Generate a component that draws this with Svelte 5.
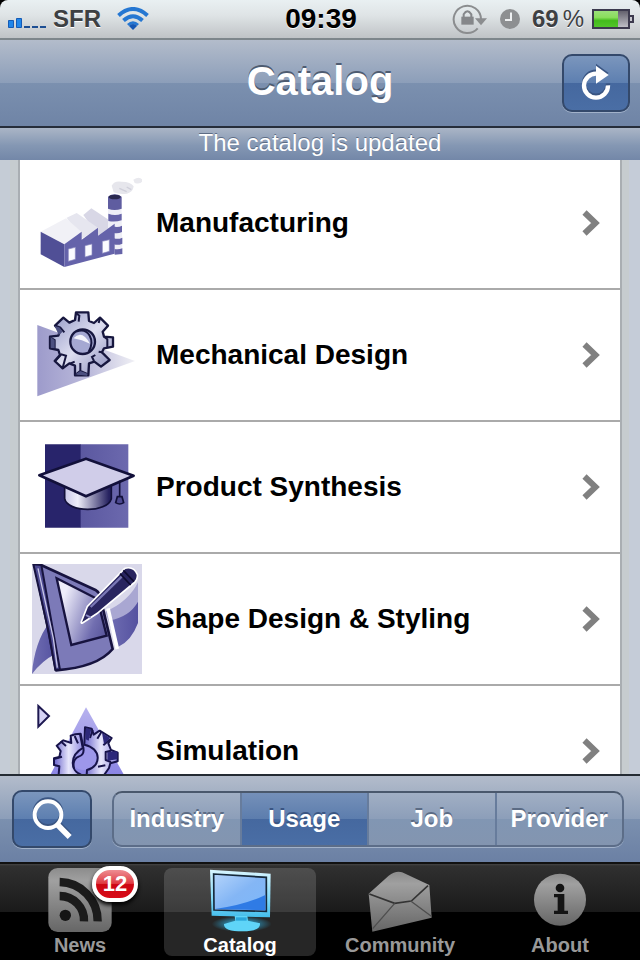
<script>
  let segment = $state('Usage');
  let tab = $state('Catalog');
  const segments = ['Industry', 'Usage', 'Job', 'Provider'];
</script>

{#snippet factory()}
  <svg class="art" viewBox="36 9 330 330" aria-hidden="true">
    <path d="M275 62q8-16 30-12q28 0 36 14q-2 18-20 22q-20 4-40-4z" fill="#e6e6ec" />
    <path d="M340 44q20-12 28 2q-4 14-24 8z" fill="#e9e9ee" />
    <path d="M298 70l22 10M320 66l14 8" stroke="#cfcfda" stroke-width="4" />
    <path d="M190 150l24-20 70 46-50 36z" fill="#d8d7e6" />
    <path d="M264 98h40l3 170-43-6z" fill="#efeff7" />
    <path d="M264 95q20-14 41 0v36q-22 8-41 0z" fill="#5f5da0" />
    <ellipse cx="284" cy="96" rx="18" ry="7" fill="#29284f" />
    <path d="M265 146q20 8 40 0v20q-20 6-40 2zM278 184q16 5 28-2v19q-14 6-27 2zM282 220q12 4 25-2v18q-14 6-25 2zM284 252q12 2 23-2v17l-23 2z" fill="#6663a8" />
    <path d="M140 158l30-14 66 46-52 32z" fill="#e6e6ef" />
    <path d="M62 200l76-40 46 40-50 38z" fill="#f1f1f6" />
    <path d="M62 200l71 38v68l-71-38z" fill="#504f96" />
    <path d="M133 238l52-38v24l49-36v24l50-36v90l-151 40z" fill="#6563aa" />
    <path d="M145 252l21-5v36l-21 6zM195 242l21-5v33l-21 6zM247 229l21-5v35l-21 6z" fill="#fbfbff" stroke="#8a88c0" stroke-width="2" />
  </svg>
{/snippet}

{#snippet gear()}
  <svg class="art" viewBox="36 15 330 330" aria-hidden="true">
    <defs>
      <linearGradient id="tri" x1="0" x2="1"><stop offset="0" stop-color="#9d9bcb" /><stop offset=".55" stop-color="#bdbcdc" /><stop offset="1" stop-color="#f0f0f5" /></linearGradient>
      <linearGradient id="steel" x1="0" y1="0" x2="1" y2="1"><stop offset="0" stop-color="#8f94c4" /><stop offset=".5" stop-color="#dddef0" /><stop offset="1" stop-color="#8487b8" /></linearGradient>
    </defs>
    <path d="M52 90L345 198 52 304z" fill="url(#tri)" />
    <path d="M168 52h37l2 26 15 6 18-16 24 24-16 18 4 15 27 2v28l-27 5-6 12 23 23-26 20-20-15-16 5-2 36h-40v-29l-17-7-20 15-24-22 16-18-5-15-25-5v-35l25-3 5-14-15-16 25-24 18 15 17-8z" fill="url(#steel)" stroke="#17173f" stroke-width="7" stroke-linejoin="round" />
    <path d="M168 54l10 8-2 18M107 92l14 6 12 14M90 127l14 8v26M106 198l18-20 14 4-10 36M165 240l16-12 24 10M181 228v-24M150 206l14-6M222 198l-6-12 10-6M246 172l-10-2M252 125l10 8v24M240 70l-4 14" fill="none" stroke="#17173f" stroke-width="6" />
    <path d="M104 93l14 4 10 13-12 10zM92 126l12 10v24l-12-2zM166 238l15-10 22 8-2 6z" fill="#4c5080" />
    <circle cx="188" cy="140" r="37" fill="#a5a8d2" stroke="#17173f" stroke-width="7" />
    <path d="M160 130q26-28 50 16q-24-12-50-16z" fill="#f4f4fb" />
    <path d="M168 110c38-16 58 26 38 60" fill="none" stroke="#17173f" stroke-width="6" />
  </svg>
{/snippet}

{#snippet mortarboard()}
  <svg class="art" viewBox="36 6 330 330" aria-hidden="true">
    <defs>
      <linearGradient id="cap" x1="0" x2="1"><stop offset="0" stop-color="#c9c7e8" /><stop offset=".28" stop-color="#eeeefa" /><stop offset=".95" stop-color="#25215f" /></linearGradient>
      <linearGradient id="wall" x1="0" x2="1"><stop offset="0" stop-color="#5b58a0" /><stop offset="1" stop-color="#6c69ae" /></linearGradient>
    </defs>
    <path d="M75 43h108v250H75z" fill="#28246b" />
    <path d="M182 43h143v250H182z" fill="url(#wall)" />
    <path d="M134 160v46c8 42 128 44 140 0v-46z" fill="url(#cap)" stroke="#12103a" stroke-width="5" />
    <path d="M58 136L198 86l143 51-143 62z" fill="#d0cde9" stroke="#12103a" stroke-width="8" stroke-linejoin="round" />
    <path d="M299 152v50" stroke="#12103a" stroke-width="5" />
    <path d="M292 200h14l5 18q-12 8-24 0z" fill="#4c4990" stroke="#12103a" stroke-width="5" />
  </svg>
{/snippet}

{#snippet tablet()}
  <svg class="art" viewBox="36 27 330 330" aria-hidden="true">
    <defs>
      <linearGradient id="glass" x1="0" y1=".3" x2="1" y2=".8"><stop offset=".1" stop-color="#eeedfa" /><stop offset=".75" stop-color="#716eb0" /><stop offset="1" stop-color="#5a579c" /></linearGradient>
      <linearGradient id="wave" x1="0" x2="1"><stop offset="0" stop-color="#6f6db2" /><stop offset="1" stop-color="#5552a0" /></linearGradient>
    </defs>
    <path d="M36 27h330v330H36z" fill="#d9d8ea" />
    <path d="M354 82v110q-20 60-64 78l-34-100q70-30 98-88z" fill="#a9a7d2" />
    <path d="M354 140v64q-20 54-60 72l-26-80q60-10 86-56z" fill="url(#wave)" />
    <path d="M36 357c4-60 24-120 50-150l20 90q-40 20-70 60z" fill="url(#wave)" />
    <path d="M264 160l28 122" stroke="#fff" stroke-width="11" />
    <path d="M44 28l24 4 160 74q10 6 12 18l38 158c-30 36-90 58-170 64L86 230z" fill="#7c7ab8" stroke="#17133f" stroke-width="8" stroke-linejoin="round" />
    <path d="M40 28l24 2 56 314h-14L86 230z" fill="#4d4a92" stroke="#17133f" stroke-width="6" />
    <path d="M54 40l46 210 12 88" fill="none" stroke="#c8c6e6" stroke-width="4" />
    <path d="M110 70l122 62 28 110-106 28z" fill="url(#glass)" stroke="#17133f" stroke-width="7" />
    <path d="M186 202l18-46L316 42q24-6 34 18q0 14-10 22L232 172z" fill="#29255f" stroke="#fff" stroke-width="10" stroke-linejoin="round" />
    <path d="M186 202l18-46L316 42q24-6 34 18q0 14-10 22L232 172z" fill="#29255f" />
    <path d="M212 156L308 62" stroke="#7b78b6" stroke-width="7" />
    <path d="M300 56l32 34M310 46l32 34" stroke="#0e0b30" stroke-width="5" />
    <path d="M198 180l14 8" stroke="#8c89c4" stroke-width="6" />
  </svg>
{/snippet}

{#snippet simulation()}
  <svg class="art" viewBox="96 48 330 330" aria-hidden="true">
    <defs>
      <linearGradient id="peak" x1="0" y1="0" x2="0" y2="1"><stop offset="0" stop-color="#b7b2ee" /><stop offset="1" stop-color="#8a84e4" /></linearGradient>
      <linearGradient id="half" x1="0" x2="1"><stop offset="0" stop-color="#6a64cc" /><stop offset=".5" stop-color="#e7e6fb" /><stop offset="1" stop-color="#8f89e0" /></linearGradient>
    </defs>
    <path d="M115 78l32 30-32 32z" fill="#d6d3f6" stroke="#1d1850" stroke-width="6" />
    <path d="M258 82L375 290H148z" fill="url(#peak)" />
    <circle cx="252" cy="226" r="44" fill="#9d97ea" />
    <g stroke="#17134a" stroke-width="6" stroke-linejoin="round">
      <path d="M226 163l-14 4 2 22-24-8-20 16 12 16-4 18-16 4v20l16 4-2 24 24 20h50l-8-20c-30-10-36-56 8-80l-8-42z" fill="url(#half)" />
      <path d="M255 142l20 4 6 18 18-12 36 22-10 16 8 20 20 8v26l-22 6-4 14-14 20-54 14 2-28c44-10 44-66-8-76z" fill="url(#half)" />
      <path d="M250 204q4 20-14 26-20 8-14 36M240 162l8 40M278 150l-8 24M304 156l-12 20M330 178l-20 18M333 212l-16 4v24l16 6M224 168l10 22M182 184l16 14M164 236l22-6M316 256l-22 4" fill="none" />
    </g>
    <path d="M258 144l16 4-8 34-9-4zM306 158l24 16-18 18zM322 216l30-2v24l-30 4z" fill="#2d287a" />
  </svg>
{/snippet}

<div class="app">
  <header class="status">
    <div class="side">
      <svg width="38" height="12" viewBox="0 0 38 12" aria-label="Signal">
        <path d="M.5 3.500h5v7h-5zM8.500 1.500h5v9h-5z" fill="#1f86ea" stroke="#155bb5" />
        <path d="M16 9h6v2h-6zM24 9h6v2h-6zM32 9h6v2h-6z" fill="#1d4f93" />
      </svg>
      <span class="carrier">SFR</span>
      <svg class="wifi" width="32" height="24" viewBox="0 0 32 24" aria-label="Wi-Fi">
        <g fill="none" stroke="#2577d2" stroke-width="4">
          <path d="M1.500 8.500Q16-4.500 30.500 8.500" />
          <path d="M6.500 13.500Q16 5 25.500 13.500" />
          <path d="M11 18Q16 13.500 21 18" stroke-width="3" />
        </g>
        <path d="M16 23l-4-4q4-4 8 0z" fill="#1557b4" />
      </svg>
    </div>
    <time>09:39</time>
    <div class="side right">
      <svg width="36" height="32" viewBox="397 10 108 96" aria-label="Rotation locked">
        <path d="M474 86A41 41 0 1 1 484 58" fill="none" stroke="#8b8d8f" stroke-width="6" />
        <path d="M466 56h36l-18 21z" fill="#8b8d8f" />
        <path d="M425 51h37v24h-37z" fill="#85878a" />
        <path d="M432 52v-8q11-18 23 0v8" fill="none" stroke="#85878a" stroke-width="6" />
      </svg>
      <svg class="clock" width="20" height="20" viewBox="0 0 20 20" aria-label="Alarm">
        <circle cx="10" cy="10" r="10" fill="#8d8f91" />
        <path d="M11 3.500V11H5" fill="none" stroke="#eef0f1" stroke-width="2" />
      </svg>
      <span class="percent">69<span>%</span></span>
      <svg class="battery" width="42" height="20" viewBox="0 0 42 20" aria-label="Battery">
        <defs>
          <linearGradient id="charge" x1="0" y1="0" x2="0" y2="1"><stop offset="0" stop-color="#9be07a" /><stop offset=".4" stop-color="#8ade5c" /><stop offset=".6" stop-color="#43bb1c" /><stop offset="1" stop-color="#52c52a" /></linearGradient>
          <linearGradient id="empty" x1="0" y1="0" x2="0" y2="1"><stop offset="0" stop-color="#5d5b68" /><stop offset="1" stop-color="#c4c4cb" /></linearGradient>
        </defs>
        <path d="M1 1h36v18H1z" fill="url(#empty)" stroke="#3c3a4e" stroke-width="2" />
        <path d="M2 2h24v16H2z" fill="url(#charge)" />
        <path d="M38 7h3v6h-3" fill="#c9c9d0" stroke="#3c3a4e" stroke-width="2" />
      </svg>
    </div>
  </header>

  <div class="nav">
    <h1>Catalog</h1>
    <button class="blue reload" aria-label="Reload">
      <svg width="32" height="36" viewBox="780 203 96 108">
        <path d="M830 229A36 36 0 1 0 864 264" fill="none" stroke="#fff" stroke-width="13" />
        <path d="M828 205l38 28-38 26z" fill="#fff" />
      </svg>
    </button>
  </div>
  <p class="banner">The catalog is updated</p>

  <main>
    <ul>
      {#each [['Manufacturing', factory], ['Mechanical Design', gear], ['Product Synthesis', mortarboard], ['Shape Design & Styling', tablet], ['Simulation', simulation]] as [name, art]}
        <li>
          <a href="#top">
            {@render art()}
            <span>{name}</span>
            <svg class="chevron" width="18" height="26" viewBox="0 0 18 26" aria-hidden="true">
              <path d="M2.500 2.500L13.500 13 2.500 23.500" fill="none" stroke="#808080" stroke-width="6" />
            </svg>
          </a>
        </li>
      {/each}
    </ul>
  </main>

  <div class="toolbar">
    <button class="blue search" aria-label="Search">
      <svg width="40" height="44" viewBox="93 350 120 132">
        <circle cx="141" cy="403" r="40" fill="none" stroke="#fff" stroke-width="12" />
        <path d="M168 432l38 38" stroke="#fff" stroke-width="17" />
      </svg>
    </button>
    <div class="segments">
      {#each segments as name}
        <button class:on={segment === name} aria-pressed={segment === name} onclick={() => (segment = name)}>{name}</button>
      {/each}
    </div>
  </div>

  <nav class="tabs" aria-label="Sections">
    <button class:on={tab === 'News'} onclick={() => (tab = 'News')}>
      <svg viewBox="144 24 192 192" aria-hidden="true">
        <defs><linearGradient id="grey" x1="0" y1="0" x2="0" y2="1"><stop offset="0" stop-color="#8c8c8c" /><stop offset=".2" stop-color="#a0a0a0" /><stop offset="1" stop-color="#666" /></linearGradient></defs>
        <rect x="145" y="24" width="190" height="192" rx="28" fill="url(#grey)" />
        <circle cx="196" cy="166" r="17" fill="#151515" />
        <path d="M179 108a73 73 0 0 1 73 76M179 66a116 116 0 0 1 114 118" fill="none" stroke="#1b1b1b" stroke-width="25" />
      </svg>
      <span>News</span>
      <b class="badge">12</b>
    </button>
    <button class:on={tab === 'Catalog'} onclick={() => (tab = 'Catalog')}>
      <svg viewBox="624 24 192 192" aria-hidden="true">
        <defs>
          <linearGradient id="display" x1="0" y1="0" x2="1" y2="1"><stop offset="0" stop-color="#b4d4fb" /><stop offset=".5" stop-color="#84b6f5" /><stop offset="1" stop-color="#7db8fa" /></linearGradient>
          <linearGradient id="frame" x1="0" y1="0" x2="0" y2="1"><stop offset="0" stop-color="#d8f5ff" /><stop offset=".65" stop-color="#7fd8f8" /><stop offset="1" stop-color="#43bdea" /></linearGradient>
          <radialGradient id="glow"><stop offset="0" stop-color="#31c6ff" /><stop offset="1" stop-color="#31c6ff" stop-opacity="0" /></radialGradient>
        </defs>
        <ellipse cx="725" cy="192" rx="90" ry="24" fill="url(#glow)" />
        <path d="M630 29l182 12-2 131-175-5z" fill="url(#frame)" />
        <path d="M641 42l158 10v102l-157-4z" fill="url(#display)" stroke="#16293b" stroke-width="5" />
        <path d="M645 147q90-12 151-42v46z" fill="#2f7be5" />
        <path d="M704 168h38l2 14 36 8q2 24-52 24-58 0-56-22l34-10z" fill="#5fd4f8" />
        <path d="M708 172h32v10h-32z" fill="#2ba7dc" />
      </svg>
      <span>Catalog</span>
    </button>
    <button class:on={tab === 'Community'} onclick={() => (tab = 'Community')}>
      <svg viewBox="144 24 192 192" aria-hidden="true">
        <path d="M146 101l60-54q26-20 50-6l72 34 7 98-178 42z" fill="url(#grey)" />
        <path d="M148 102l76 28 50-7 50-46" fill="none" stroke="#343434" stroke-width="5" />
        <path d="M224 130l-66 76M272 123l62 46" fill="none" stroke="#4e4e4e" stroke-width="4" />
      </svg>
      <span>Community</span>
    </button>
    <button class:on={tab === 'About'} onclick={() => (tab = 'About')}>
      <svg viewBox="624 24 192 192" aria-hidden="true">
        <circle cx="720" cy="119" r="78" fill="url(#grey)" />
        <circle cx="720" cy="84" r="13" fill="#141414" />
        <path d="M702 102h31v50h11v10h-42v-10h11v-40h-11z" fill="#141414" />
      </svg>
      <span>About</span>
    </button>
  </nav>
</div>

<style>
  :global(body) { margin: 0; background: #000; }
  .app {
    display: flex;
    flex-direction: column;
    height: 100vh;
    overflow: hidden;
    font-family: "Liberation Sans", Arial, Helvetica, sans-serif;
    font-weight: bold;
  }
  button { margin: 0; padding: 0; border: 0; background: none; color: inherit; font: inherit; cursor: pointer; }
  svg { display: block; flex: none; }

  .status {
    box-sizing: border-box;
    height: 40px;
    flex: none;
    display: grid;
    grid-template-columns: 1fr auto 1fr;
    align-items: center;
    padding: 0 6px 0 8px;
    border-bottom: 2px solid #7d868b;
    border-radius: 8px 8px 0 0;
    background: linear-gradient(#e9f0f2, #dfe4e6 40%, #bfc3c6);
    color: #3d4043;
    font-size: 24px;
  }
  .side { display: flex; align-items: center; }
  .side > :first-child { margin-top: 8px; }
  .right { justify-content: flex-end; }
  .right > :first-child { margin-top: 0; }
  .carrier { margin-left: 7px; text-shadow: 0 1px #fff; }
  .wifi { margin-left: 16px; }
  time { color: #000; font-size: 28px; text-shadow: 0 1px #fff; }
  .clock { margin-left: 12px; }
  .percent { display: flex; gap: 4px; margin: 0 8px 0 12px; text-shadow: 0 1px #fff; }
  .percent span { font-weight: normal; }

  .nav {
    box-sizing: border-box;
    height: 88px;
    flex: none;
    display: grid;
    grid-template-columns: 1fr auto 1fr;
    align-items: center;
    padding: 0 10px;
    border-bottom: 2px solid #262d3a;
    background: linear-gradient(#b3bccb, #8c9eb9 50%, #7b90af 50%, #6f84a6);
  }
  h1 { grid-column: 2; margin: 0; color: #fff; font-size: 40px; line-height: 46px; padding-bottom: 4px; text-shadow: 0 -2px #4e5c71; }
  .reload { justify-self: end; width: 68px; }
  .blue {
    box-sizing: border-box;
    height: 58px;
    display: flex;
    align-items: center;
    justify-content: center;
    border: 2px solid #34496b;
    border-radius: 10px;
    background: linear-gradient(#7b96bd, #5d7fb0 50%, #45689f 50%, #4a6ea5);
    box-shadow: 0 1px #a2b2ca;
  }
  .blue svg { filter: drop-shadow(0 -2px 0 #3a5582); }
  .banner {
    height: 32px;
    flex: none;
    margin: 0;
    background: linear-gradient(#aab5c6, #8497b3 55%, #7387a8);
    color: #fff;
    font-size: 24px;
    font-weight: normal;
    line-height: 30px;
    text-align: center;
    text-shadow: 0 -1px #5d6c84;
  }

  main {
    flex: 1;
    min-height: 0;
    overflow: hidden;
    padding: 0 18px;
    background: linear-gradient(90deg, #c5ccd6 10px, #c6cccf 10px, #c6cccf calc(100% - 11px), #c5ccd8 calc(100% - 11px));
  }
  ul { list-style: none; margin: -2px 0 0; padding: 0; border: solid #a9aeb2; border-width: 0 2px; background: #fff; }
  a {
    display: flex;
    align-items: center;
    height: 130px;
    padding: 0 20px 0 12px;
    border-bottom: 2px solid #aaa;
    color: #000;
    font-size: 28px;
    text-decoration: none;
  }
  .art { width: 110px; height: 110px; }
  a span { flex: 1; margin-left: 14px; }

  .toolbar {
    box-sizing: border-box;
    height: 88px;
    flex: none;
    display: flex;
    align-items: center;
    gap: 20px;
    padding: 0 16px 0 12px;
    border-top: 2px solid #242b33;
    background: linear-gradient(#b3bccb, #8c9eb9 50%, #7b90af 50%, #6b80a4);
  }
  .search { width: 80px; }
  .segments {
    box-sizing: border-box;
    flex: 1;
    height: 56px;
    display: flex;
    overflow: hidden;
    border: 2px solid #5c6d88;
    border-top-color: #4a586c;
    border-radius: 10px;
    background: linear-gradient(#a1afc4, #8c9eb9 50%, #8196b3 50%, #8395b0);
    box-shadow: 0 1px #a2b2ca;
  }
  .segments button { flex: 1; color: #fff; font-size: 24px; text-shadow: 0 -2px #5b6b84; }
  .segments button + button { border-left: 2px solid #677c9c; }
  .segments .on { background: linear-gradient(#7590b9, #5c7dad 50%, #45689f 50%, #4a6ea5); text-shadow: 0 -2px #3a5582; }

  .tabs {
    box-sizing: border-box;
    height: 98px;
    flex: none;
    display: flex;
    gap: 8px;
    padding: 4px 4px;
    border-top: 2px solid #111;
    background: linear-gradient(#454545, #303030 2px, #1a1a1a 48px, #000 48px);
  }
  .tabs button {
    position: relative;
    flex: 1;
    height: 88px;
    display: flex;
    flex-direction: column;
    align-items: center;
    border-radius: 8px;
    color: #999;
    font-size: 20px;
    line-height: 26px;
  }
  .tabs .on { background: rgba(255, 255, 255, .15); color: #fff; }
  .tabs svg { width: 64px; height: 64px; }
  .badge {
    position: absolute;
    top: -2px;
    left: calc(50% + 12px);
    box-sizing: border-box;
    width: 46px;
    height: 36px;
    border: 4px solid #fff;
    border-radius: 18px;
    background: linear-gradient(#ee8d92, #df3a42 48%, #cd0713 52%, #d80b18);
    box-shadow: 0 3px 4px #000;
    color: #fff;
    font-size: 22px;
    line-height: 28px;
    text-align: center;
  }
</style>
